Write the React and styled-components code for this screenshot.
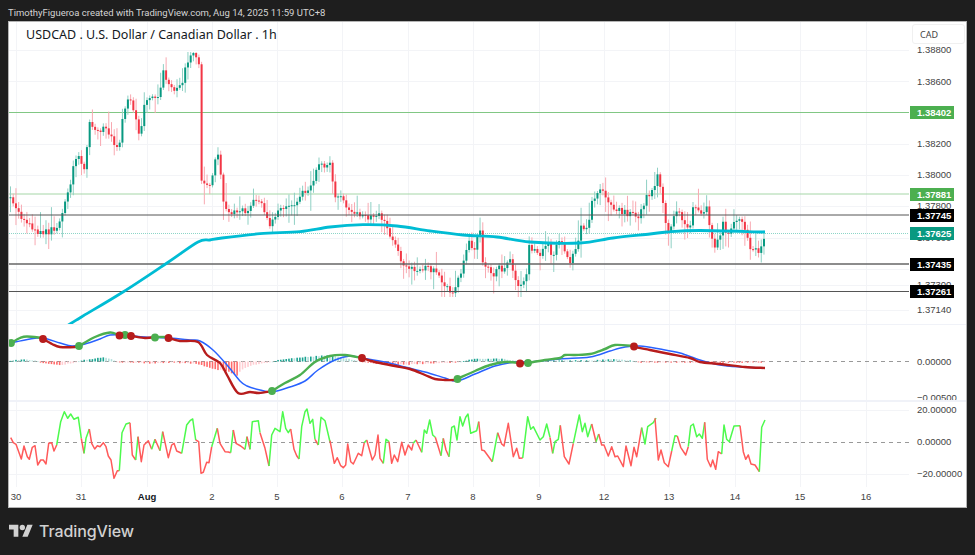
import React from 'react';
import styled, { createGlobalStyle } from 'styled-components';

const GlobalStyle = createGlobalStyle`
  html, body { margin: 0; padding: 0; background: #1e1e1e; }
`;

const Page = styled.div`
  width: 975px;
  height: 555px;
  overflow: hidden;
  display: flex;
  flex-direction: column;
  background: #1e1e1e;
`;

const CreditBar = styled.div`
  height: 21px;
  box-sizing: border-box;
  padding: 3px 0 0 8px;
  display: flex;
  align-items: center;
  color: #d4d4d4;
  font: 9.5px Roboto, sans-serif;
`;

const ChartFrame = styled.div`
  position: relative;
  width: 957px;
  height: 485px;
  margin-left: 8px;
  border: 1px solid #b4b4b4;
  background: #fff;
  display: grid;
  grid-template-rows: 302px 76px 87px 20px;
`;

const Title = styled.div`
  position: absolute;
  left: 17px;
  top: 4px;
  color: #131722;
  font: 12.5px "Noto Sans", sans-serif;
  white-space: nowrap;
`;

const CurrencyBox = styled.div`
  position: absolute;
  left: 903px;
  top: 2px;
  width: 44px;
  height: 18px;
  padding-left: 7px;
  display: flex;
  align-items: center;
  background: #fff;
  border: 1px solid #f0f0f0;
  border-radius: 3px;
  color: #444;
  font: 9px "Noto Sans", sans-serif;
`;

const Pane = styled.div`
  display: grid;
  grid-template-columns: 900px 57px;
  min-height: 0;
  border-top: ${(p) => p.$divider || 0}px solid #f0f2f8;
`;

const Plot = styled.svg`
  display: block;
  width: 900px;
  height: 100%;
`;

const PriceAxis = styled.div`
  position: relative;
  overflow: hidden;
  font: 9.5px "Liberation Sans", sans-serif;
`;

const AxisLabel = styled.span`
  position: absolute;
  left: 8px;
  top: ${(p) => p.$y - 6}px;
  height: 12px;
  line-height: 12px;
  color: #444;
`;

const badgeColors = { green: '#4caf50', teal: '#089981', black: '#000' };

const PriceBadge = styled.span`
  position: absolute;
  left: 1px;
  top: ${(p) => p.$y - 6.5}px;
  width: 44px;
  height: 13px;
  box-sizing: border-box;
  padding-left: 7px;
  line-height: 13px;
  color: #fff;
  font-weight: 700;
  background: ${(p) => badgeColors[p.$tone]};
`;

const TimeAxis = styled.div`
  position: relative;
  color: #444;
  font: 9.5px "Liberation Sans", sans-serif;
`;

const TimeTick = styled.span`
  position: absolute;
  left: ${(p) => p.$x - 9}px;
  top: 4px;
  transform: translateX(-50%);
  font-weight: ${(p) => (p.$bold ? 700 : 400)};
  color: ${(p) => (p.$bold ? '#131722' : '#444')};
`;

const Footer = styled.div`
  flex: 1;
  padding: 0 0 1px 9px;
  display: flex;
  align-items: center;
  gap: 6px;
  color: #d1d1d1;
`;

const BrandName = styled.span`
  font: 500 16px Inter, sans-serif;
  letter-spacing: -0.1px;
`;

// vertical day lines, shared by the three panes
const dayLines = [16, 81, 147, 212, 277, 342, 408, 473, 539, 604, 669, 735, 800, 866];
const timeTicks = [
  ['30', 16], ['31', 81], ['Aug', 147, true], ['2', 212], ['5', 277], ['6', 342], ['7', 408],
  ['8', 473], ['9', 539], ['12', 604], ['13', 669], ['14', 735], ['15', 800], ['16', 866],
];

// closes traced off the chart, x then y in page pixels
const closeTrace = [
  [10, 200], [15, 205], [20, 215], [25, 222], [30, 225], [35, 230], [42, 232], [50, 232], [58, 225], [62, 215],
  [66, 200], [70, 190], [72, 165], [75, 162], [78, 150], [82, 165], [85, 170], [87, 150], [90, 117], [92, 130],
  [100, 130], [105, 130], [110, 135], [115, 150], [120, 140], [123, 110], [128, 100], [132, 105], [135, 118],
  [140, 135], [145, 100], [150, 95], [155, 95], [160, 97], [163, 67], [168, 85], [172, 85], [177, 90], [183, 80],
  [187, 60], [190, 57], [193, 53], [196, 55], [199, 63], [201, 182], [208, 185], [212, 178], [217, 150], [221, 180],
  [224, 205], [230, 215], [240, 212], [250, 208], [255, 200], [262, 205], [270, 225], [275, 215], [285, 205],
  [295, 205], [305, 190], [310, 190], [318, 165], [322, 165], [330, 163], [335, 197], [340, 195], [345, 205],
  [350, 215], [360, 215], [370, 218], [380, 216], [385, 225], [393, 243], [400, 257], [407, 267], [413, 270],
  [420, 268], [427, 267], [433, 270], [440, 280], [447, 288], [452, 293], [457, 280], [460, 277], [465, 258],
  [468, 237], [473, 253], [480, 228], [482, 262], [488, 270], [493, 280], [498, 263], [503, 270], [510, 260],
  [515, 280], [520, 287], [527, 273], [528, 243], [533, 250], [540, 253], [547, 243], [552, 255], [560, 242],
  [570, 260], [577, 250], [580, 225], [587, 230], [592, 202], [597, 193], [602, 190], [605, 200], [613, 208],
  [620, 210], [630, 215], [640, 215], [647, 197], [655, 187], [658, 170], [662, 200], [667, 228], [670, 232],
  [675, 212], [680, 213], [685, 223], [690, 225], [693, 208], [700, 213], [707, 207], [710, 227], [715, 248],
  [719, 240], [723, 222], [728, 235], [733, 222], [740, 222], [745, 227], [749, 247], [757, 250], [759, 258],
  [762, 240], [765, 234],
];

const maLine = [
  [20, 355], [70, 324], [83, 316], [123, 292], [167, 263], [198, 242], [210, 240], [222, 238], [260, 233.7],
  [300, 231.6], [330, 227], [363, 224.7], [397, 226], [430, 231], [463, 235], [497, 237], [530, 242], [580, 243],
  [613, 238], [650, 234], [667, 232], [700, 230.5], [765, 232],
];

const macdLine = [
  [11, 343], [30, 339], [43, 338], [60, 343], [72, 346], [85, 344], [100, 339], [110, 335], [125, 335], [145, 337],
  [170, 338], [190, 340], [200, 341], [213, 350], [227, 365], [240, 381], [247, 386], [260, 390], [272, 392], [290, 387],
  [305, 381], [318, 370], [335, 360], [350, 356], [362, 358], [385, 362], [405, 367], [425, 372], [445, 378],
  [457, 381], [475, 374], [495, 366], [515, 362], [530, 362], [560, 359], [590, 357], [610, 351], [625, 347],
  [640, 346], [660, 349], [680, 353], [700, 360], [720, 365], [740, 367], [765, 368],
];

const signalRuns = [
  ['#4caf50', [[11, 343], [20, 338], [27, 336.5], [43, 338]]],
  ['#b71c1c', [[43, 339], [52, 344], [60, 347], [75, 347], [79, 346]]],
  ['#4caf50', [[79, 346], [95, 337], [110, 332.5], [119, 335], [125, 335]]],
  ['#b71c1c', [[119, 335], [131, 336], [145, 338], [155, 337]]],
  ['#4caf50', [[155, 337], [169, 337]]],
  ['#b71c1c', [[169, 338], [180, 341], [198, 342], [207, 355], [220, 363], [227, 375], [238, 393], [250, 392], [259, 393], [272, 391]]],
  ['#4caf50', [[272, 391], [285, 383], [300, 375], [315, 362], [330, 356], [345, 355], [362, 358]]],
  ['#b71c1c', [[362, 358], [375, 362], [395, 366], [410, 369], [425, 375], [435, 379], [445, 380], [457, 380]]],
  ['#4caf50', [[457, 379], [475, 371], [490, 365], [505, 362], [520, 363]]],
  ['#b71c1c', [[520, 363], [528, 363]]],
  ['#4caf50', [[528, 363], [545, 360], [560, 358], [565, 355], [575, 355], [590, 354], [605, 349], [615, 345], [634, 346]]],
  ['#b71c1c', [[634, 347], [650, 350], [670, 354], [690, 358], [700, 362], [720, 364], [745, 367], [765, 368]]],
];

const crossDots = [
  ['#4caf50', 11, 343], ['#b71c1c', 43, 339], ['#4caf50', 79, 346], ['#4caf50', 125, 335], ['#b71c1c', 119.5, 335.5],
  ['#b71c1c', 131, 336], ['#4caf50', 155, 337.5], ['#b71c1c', 168.5, 338], ['#4caf50', 272, 391], ['#b71c1c', 362, 358],
  ['#4caf50', 457.5, 379], ['#b71c1c', 520, 363.5], ['#4caf50', 528, 363], ['#b71c1c', 634, 346.5],
];

// histogram height above (+) or below (-) the zero line, in pixels
const histTrace = [
  [10, 1], [25, 2], [35, 1], [40, -1], [55, -3], [60, -4], [75, -1], [80, 1], [95, 3], [105, 4], [115, 1], [120, -1],
  [135, -1], [150, -2], [170, -1], [190, -2], [200, -3], [215, -8], [225, -9], [237, -14], [242, -8], [255, -3], [270, -1], [280, 2],
  [300, 4], [325, 6], [340, 5], [355, 1], [365, -1], [385, -3], [410, -3], [430, -2], [455, -1], [465, 1], [480, 3],
  [500, 3], [515, 1], [525, 0], [545, 1], [570, 1], [590, 1], [610, 2], [620, 2], [630, 1], [640, -1], [700, -1], [765, -1],
];

const G = '#4dfa4d';
const R = '#ff5a5a';

// oscillator runs, scaled up 3x from a crop: each group has its own origin
const oscRuns = [
  [0, 390, [
    [R, [[32, 143], [40, 158], [48, 163], [64, 207], [72, 168], [82, 200], [88, 208], [97, 172], [105, 167], [113, 225], [122, 210], [130, 210], [138, 222], [146, 160], [155, 158], [162, 183], [170, 165]]],
    [G, [[170, 165], [182, 95], [193, 65], [203, 85], [212, 72], [222, 88], [235, 82], [244, 145]]],
    [R, [[244, 145], [252, 190]]],
    [G, [[252, 190], [258, 145], [268, 117]]],
    [R, [[268, 117], [275, 160], [284, 177], [292, 167], [300, 170], [310, 158], [318, 170], [325, 198], [333, 210], [342, 265], [352, 242], [358, 242]]],
    [G, [[358, 242], [366, 128], [378, 102], [390, 98]]],
    [R, [[390, 98], [397, 195], [407, 210]]],
    [G, [[407, 210], [414, 140]]],
    [R, [[414, 140], [424, 215], [432, 165], [445, 152], [455, 178]]],
    [G, [[455, 178], [465, 148]]],
    [R, [[465, 148], [480, 182]]],
    [G, [[480, 182], [488, 125]]],
    [R, [[488, 125], [505, 203], [515, 165], [522, 160], [530, 183], [545, 190]]],
    [G, [[545, 190], [560, 105], [570, 92], [578, 87], [587, 150]]],
    [R, [[587, 150], [596, 155], [603, 250], [610, 247], [620, 217], [627, 218], [635, 170]]],
    [G, [[635, 170], [652, 115]]],
    [R, [[652, 115], [660, 160], [675, 185], [685, 186], [692, 188]]],
    [G, [[692, 188], [700, 120]]],
    [R, [[700, 120], [708, 160], [722, 168], [735, 178]]],
    [G, [[735, 178], [741, 140]]],
    [R, [[741, 140], [750, 178]]],
    [G, [[750, 178], [757, 95], [775, 92], [780, 128]]],
    [R, [[780, 128], [795, 175], [807, 228]]],
    [G, [[807, 228], [815, 135], [825, 115], [840, 125], [848, 65], [857, 115], [865, 128], [872, 117]]],
    [R, [[872, 117], [882, 178], [890, 197], [897, 207]]],
    [G, [[897, 207], [905, 110], [915, 65], [921, 57], [930, 100], [938, 88], [945, 148]]],
    [R, [[945, 148], [955, 165]]],
    [G, [[955, 165], [963, 82], [975, 92], [990, 156]]],
  ]],
  [330, 320, [
    [R, [[0, 362], [13, 430], [22, 413], [32, 437], [40, 443], [47, 435], [53, 372], [62, 425], [70, 432], [85, 400], [95, 407], [103, 368]]],
    [G, [[103, 368], [110, 360]]],
    [R, [[110, 360], [127, 420], [135, 405], [144, 345], [150, 415], [160, 430]]],
    [G, [[160, 430], [168, 358], [177, 365]]],
    [R, [[177, 365], [185, 430], [193, 405], [203, 425], [215, 367], [225, 405], [235, 375], [245, 390], [250, 370]]],
    [G, [[250, 370], [258, 360]]],
    [R, [[258, 360], [275, 397]]],
    [G, [[275, 397], [283, 330], [290, 340], [299, 300], [308, 345], [316, 352]]],
    [R, [[316, 352], [333, 407]]],
    [G, [[333, 407], [340, 355]]],
    [R, [[340, 355], [348, 390], [357, 410]]],
    [G, [[357, 410], [365, 322], [373, 318], [381, 360], [390, 290], [398, 318], [407, 292], [414, 282], [422, 340], [440, 332], [446, 305]]],
    [R, [[446, 305], [455, 390], [463, 392], [487, 425]]],
    [G, [[487, 425], [503, 338]]],
    [R, [[503, 338], [515, 372], [522, 378], [535, 310], [550, 410], [560, 385], [568, 415], [578, 414]]],
    [G, [[578, 414], [593, 290], [602, 328], [610, 320], [630, 360], [640, 350], [650, 312], [660, 352]]],
    [R, [[660, 352], [668, 400]]],
    [G, [[668, 400], [675, 365], [685, 358], [691, 316]]],
    [R, [[691, 316], [703, 410], [717, 432], [730, 370]]],
    [G, [[730, 370], [748, 285], [757, 335], [765, 310], [773, 350], [785, 312]]],
    [R, [[785, 312], [798, 365]]],
    [G, [[798, 365], [806, 342]]],
    [R, [[806, 342], [815, 375], [822, 375], [835, 408], [845, 380], [855, 410], [863, 408], [880, 440], [888, 378], [903, 437], [912, 382], [920, 410], [935, 323]]],
    [G, [[935, 323], [945, 372], [953, 320], [970, 308], [978, 294]]],
  ]],
  [650, 340, [
    [R, [[15, 235], [25, 360], [33, 330], [43, 368], [55, 380], [65, 333]]],
    [G, [[65, 333], [75, 287], [82, 288]]],
    [R, [[82, 288], [92, 322], [107, 345], [115, 320]]],
    [G, [[115, 320], [122, 258], [130, 252], [140, 290], [148, 282], [157, 295], [164, 247]]],
    [R, [[164, 247], [172, 358], [182, 380], [188, 360], [197, 388], [205, 335], [215, 342]]],
    [G, [[215, 342], [222, 255], [230, 298], [238, 305], [252, 258], [270, 257]]],
    [R, [[270, 257], [280, 335], [287, 358], [295, 345], [303, 372], [315, 375], [328, 395]]],
    [G, [[328, 395], [335, 262], [345, 240]]],
  ]],
];

const oscLines = oscRuns.flatMap(([ox, oy, runs]) =>
  runs.map(([color, pts]) => [color, pts.map(([x, y]) => [ox + x / 3, oy + y / 3])])
);

function toPoints(pts) {
  return pts.map(([x, y]) => `${x.toFixed(1)},${y.toFixed(1)}`).join(' ');
}

// catmull-rom through the traced points, the averages are smooth curves
function smoothPath(pts) {
  let d = `M${pts[0][0]} ${pts[0][1]}`;
  for (let i = 0; i < pts.length - 1; i++) {
    const p0 = pts[i - 1] || pts[i];
    const p1 = pts[i];
    const p2 = pts[i + 1];
    const p3 = pts[i + 2] || p2;
    const c1x = p1[0] + (p2[0] - p0[0]) / 6;
    const c1y = p1[1] + (p2[1] - p0[1]) / 6;
    const c2x = p2[0] - (p3[0] - p1[0]) / 6;
    const c2y = p2[1] - (p3[1] - p1[1]) / 6;
    d += ` C${c1x.toFixed(1)} ${c1y.toFixed(1)} ${c2x.toFixed(1)} ${c2y.toFixed(1)} ${p2[0]} ${p2[1]}`;
  }
  return d;
}

function lerpAt(trace, x) {
  for (let i = 1; i < trace.length; i++) {
    if (x <= trace[i][0]) {
      const [x0, y0] = trace[i - 1];
      const [x1, y1] = trace[i];
      return y0 + ((y1 - y0) * (x - x0)) / (x1 - x0);
    }
  }
  return trace[trace.length - 1][1];
}

function seeded(seed) {
  let s = seed;
  return () => {
    s = (s * 16807) % 2147483647;
    return s / 2147483647;
  };
}

const BAR_STEP = 2.73;

function buildCandles() {
  const rnd = seeded(4711);
  const out = [];
  let prev = 198;
  for (let x = 10.5; x <= 765; x += BAR_STEP) {
    const close = Math.max(53, lerpAt(closeTrace, x) + (rnd() - 0.5) * 7);
    const top = Math.min(prev, close);
    const bottom = Math.max(prev, close);
    const hi = Math.max(52, top - 2 - rnd() * rnd() * 20);
    const lo = Math.min(297, bottom + 2 + rnd() * rnd() * 20);
    out.push({ x, top, bottom: Math.max(bottom, top + 1), hi, lo, up: close < prev });
    prev = close;
  }
  return out;
}

function buildHistogram() {
  const rnd = seeded(99);
  const out = [];
  let last = 0;
  for (let x = 10.5; x <= 765; x += BAR_STEP) {
    const v = lerpAt(histTrace, x) + (rnd() - 0.5) * 0.8;
    out.push({ x, v, strong: Math.abs(v) >= Math.abs(last) });
    last = v;
  }
  return out;
}

const candles = buildCandles();
const histogram = buildHistogram();

function histColor({ v, strong }) {
  if (v >= 0) return strong ? '#1aa391' : '#b2dfdb';
  return strong ? '#ff6b6b' : '#ffcdd2';
}

function DayLines({ top, bottom }) {
  return dayLines.map((x) => (
    <line key={x} x1={x + 0.5} x2={x + 0.5} y1={top} y2={bottom} stroke="#f3f4f7" />
  ));
}

function RowLines({ rows }) {
  return rows.map((y) => <line key={y} x1={9} x2={909} y1={y} y2={y} stroke="#f3f4f7" />);
}

function MainPlot() {
  return (
    <Plot viewBox="9 22 900 302" preserveAspectRatio="none">
      <DayLines top={22} bottom={324} />
      <RowLines rows={[50.5, 81.5, 144.5, 175.5, 206.5, 238.5, 269.5, 285.5, 310.5]} />
      <line x1={9} x2={909} y1={112.5} y2={112.5} stroke="#81c784" />
      <line x1={9} x2={909} y1={194} y2={194} stroke="#a5d6a7" />
      <line x1={9} x2={909} y1={233.5} y2={233.5} stroke="#8ed6c8" strokeDasharray="1 1" />
      {candles.map((c) => (
        <g key={c.x}>
          <line x1={c.x} x2={c.x} y1={c.hi} y2={c.lo} stroke={c.up ? '#8fd0c4' : '#f8a9b1'} />
          <rect x={c.x - 1} y={c.top} width={2} height={c.bottom - c.top} fill={c.up ? '#089981' : '#f23645'} />
        </g>
      ))}
      <line x1={9} x2={909} y1={215} y2={215} stroke="#555" />
      <line x1={9} x2={909} y1={264} y2={264} stroke="#666" strokeWidth={1.5} />
      <line x1={9} x2={909} y1={291.5} y2={291.5} stroke="#555" />
      <path d={smoothPath(maLine)} fill="none" stroke="#00bcd4" strokeWidth={2.8} />
    </Plot>
  );
}

function MacdPlot() {
  return (
    <Plot viewBox="9 325 900 75" preserveAspectRatio="none">
      <DayLines top={325} bottom={400} />
      <line x1={9} x2={909} y1={361.5} y2={361.5} stroke="#999" strokeDasharray="4 4" />
      {histogram.map((b) => (
        <rect
          key={b.x}
          x={b.x - 0.8}
          y={b.v >= 0 ? 361.5 - b.v : 361.5}
          width={1.6}
          height={Math.max(Math.abs(b.v), 0.8)}
          fill={histColor(b)}
        />
      ))}
      <path d={smoothPath(macdLine)} fill="none" stroke="#2962ff" strokeWidth={1.5} />
      {signalRuns.map(([color, pts]) => (
        <path key={pts[0][0]} d={smoothPath(pts)} fill="none" stroke={color} strokeWidth={2.4} />
      ))}
      {crossDots.map(([color, x, y]) => (
        <circle key={x} cx={x} cy={y} r={3.9} fill={color} />
      ))}
    </Plot>
  );
}

function OscPlot() {
  return (
    <Plot viewBox="9 402 900 85" preserveAspectRatio="none">
      <DayLines top={402} bottom={487} />
      <RowLines rows={[410.5, 474.5]} />
      <line x1={9} x2={909} y1={442.5} y2={442.5} stroke="#999" strokeDasharray="4 4" />
      {oscLines.map(([color, pts]) => (
        <polyline key={`${pts[0][0]}-${pts[0][1]}`} points={toPoints(pts)} fill="none" stroke={color} strokeWidth={1.5} strokeLinejoin="round" />
      ))}
    </Plot>
  );
}

const mainLabels = [
  ['1.38800', 50], ['1.38600', 81.5], ['1.38200', 144], ['1.38000', 175], ['1.37800', 206],
  ['1.37600', 238], ['1.37300', 285], ['1.37140', 310],
];
const mainBadges = [
  ['1.38402', 112.5, 'green'], ['1.37881', 194, 'green'], ['1.37745', 215.5, 'black'],
  ['1.37625', 233.5, 'teal'], ['1.37435', 264, 'black'], ['1.37261', 291.5, 'black'],
];

export default function App() {
  return (
    <Page>
      <GlobalStyle />
      <CreditBar>TimothyFigueroa created with TradingView.com, Aug 14, 2025 11:59 UTC+8</CreditBar>
      <ChartFrame>
        <Pane>
          <MainPlot />
          <PriceAxis>
            {mainLabels.map(([text, y]) => (
              <AxisLabel key={text} $y={y - 22}>{text}</AxisLabel>
            ))}
            {mainBadges.map(([text, y, tone]) => (
              <PriceBadge key={text} $y={y - 22} $tone={tone}>{text}</PriceBadge>
            ))}
          </PriceAxis>
        </Pane>
        <Pane $divider={1}>
          <MacdPlot />
          <PriceAxis>
            <AxisLabel $y={36.5}>0.00000</AxisLabel>
            <AxisLabel $y={73}>−0.00500</AxisLabel>
          </PriceAxis>
        </Pane>
        <Pane $divider={2}>
          <OscPlot />
          <PriceAxis>
            <AxisLabel $y={8}>20.00000</AxisLabel>
            <AxisLabel $y={40}>0.00000</AxisLabel>
            <AxisLabel $y={72}>−20.00000</AxisLabel>
          </PriceAxis>
        </Pane>
        <TimeAxis>
          {timeTicks.map(([text, x, bold]) => (
            <TimeTick key={text} $x={x} $bold={bold}>{text}</TimeTick>
          ))}
        </TimeAxis>
        <Title>USDCAD . U.S. Dollar / Canadian Dollar . 1h</Title>
        <CurrencyBox>CAD</CurrencyBox>
      </ChartFrame>
      <Footer>
        <svg width="24" height="19" viewBox="0 0 36 28" fill="currentColor" aria-hidden="true">
          <path d="M14 22H7V11H0V4h14v18zM28 22h-8l7.5-18h8L28 22z" />
          <circle cx="20" cy="8" r="4" />
        </svg>
        <BrandName>TradingView</BrandName>
      </Footer>
    </Page>
  );
}
